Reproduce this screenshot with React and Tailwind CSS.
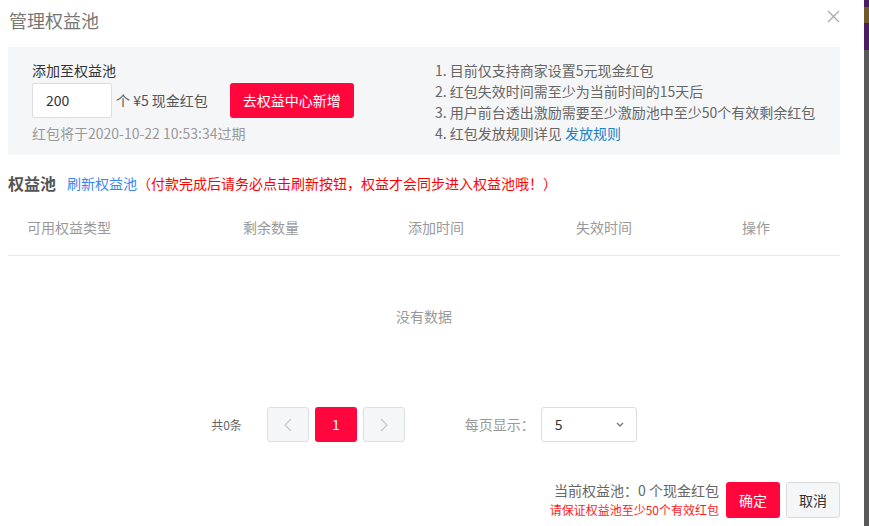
import React from 'react';

const font = { fontFamily: '"Noto Sans CJK SC", "Noto Sans", sans-serif' };

const rules = [
  '1. 目前仅支持商家设置5元现金红包',
  '2. 红包失效时间需至少为当前时间的15天后',
  '3. 用户前台透出激励需要至少激励池中至少50个有效剩余红包',
];

const columns = ['可用权益类型', '剩余数量', '添加时间', '失效时间', '操作'];

function Chevron({ dir }) {
  return (
    <svg width="8" height="14" viewBox="0 0 8 14" fill="none">
      <path
        d={dir === 'left' ? 'M7 1L1 7l6 6' : 'M1 1l6 6-6 6'}
        stroke="#c8c8c8"
        strokeWidth="1.2"
      />
    </svg>
  );
}

export default function App() {
  return (
    <div className="flex h-[526px] w-[869px] overflow-hidden bg-white" style={font}>
      {/* Modal */}
      <div className="flex w-[864px] flex-col bg-white">
        {/* Title */}
        <div className="flex h-[47px] items-start justify-between pl-[9px] pr-[24px] pt-[8px]">
          <span className="text-[18px] leading-[24px] text-[#777]">管理权益池</span>
          <svg width="13" height="13" viewBox="0 0 13 13" className="mt-[2px]">
            <path d="M1 1l11 11M12 1L1 12" stroke="#a8a8a8" strokeWidth="1.2" />
          </svg>
        </div>

        {/* Info box */}
        <div className="mx-[8px] flex h-[108px] w-[832px] bg-[#f5f6f8] pl-[24px] pt-[13px]">
          <div className="w-[401px]">
            <div className="text-[14px] leading-[20px] text-[#333]">添加至权益池</div>
            <div className="mt-[3px] flex items-center">
              <div className="flex h-[35px] w-[80px] items-center rounded-[2px] border border-[#dcdcdc] bg-white pl-[13px] text-[14px] text-[#333]">
                200
              </div>
              <span className="ml-[4px] text-[14px] text-[#555]">个 ¥5 现金红包</span>
              <button className="ml-[22px] h-[35px] w-[124px] rounded-[3px] bg-[#ff063c] text-[14px] text-white">
                去权益中心新增
              </button>
            </div>
            <div className="mt-[5px] text-[14px] leading-[20px] text-[#9a9a9a]">红包将于2020-10-22 10:53:34过期</div>
          </div>
          <div className="pl-[2px] text-[14px] leading-[21px] text-[#666]">
            {rules.map((r) => (
              <div key={r}>{r}</div>
            ))}
            <div>
              4. 红包发放规则详见 <span className="text-[#1e7fc6]">发放规则</span>
            </div>
          </div>
        </div>

        {/* Section heading */}
        <div className="mt-[16px] flex h-[24px] items-center pl-[8px]">
          <span className="text-[16px] font-bold text-[#555]">权益池</span>
          <span className="ml-[11px] text-[14px] text-[#3a86f5]">刷新权益池</span>
          <span className="text-[14px] text-[#ff0000]">（付款完成后请务必点击刷新按钮，权益才会同步进入权益池哦！）</span>
        </div>

        {/* Table */}
        <div className="mx-[8px] mt-[5px] w-[832px]">
          <div className="grid h-[56px] grid-cols-[216px_165px_168px_166px_1fr] items-center border-b border-[#e8e8e8] pl-[19px] text-[14px] text-[#999]">
            {columns.map((c) => (
              <span key={c}>{c}</span>
            ))}
          </div>
          <div className="flex h-[120px] items-center justify-center text-[14px] text-[#999]">没有数据</div>
        </div>

        {/* Pagination */}
        <div className="mt-[31px] flex h-[35px] w-[848px] items-center justify-center">
          <span className="text-[12px] text-[#666]">共0条</span>
          <div className="ml-[25px] flex h-[35px] w-[42px] items-center justify-center rounded-[3px] border border-[#dcdfe6] bg-[#f5f6f8]">
            <Chevron dir="left" />
          </div>
          <div className="ml-[6px] flex h-[35px] w-[42px] items-center justify-center rounded-[3px] bg-[#ff063c] text-[14px] text-white">
            1
          </div>
          <div className="ml-[6px] flex h-[35px] w-[42px] items-center justify-center rounded-[3px] border border-[#dcdfe6] bg-[#f5f6f8]">
            <Chevron dir="right" />
          </div>
          <span className="ml-[60px] text-[14px] text-[#999]">每页显示：</span>
          <div className="ml-[6px] flex h-[35px] w-[96px] items-center justify-between rounded-[3px] border border-[#dcdcdc] bg-white pl-[13px] pr-[12px] text-[14px] text-[#333]">
            <span>5</span>
            <svg width="8" height="5" viewBox="0 0 8 5">
              <path d="M1 1l3 3 3-3" stroke="#777" strokeWidth="1.4" fill="none" />
            </svg>
          </div>
        </div>

        {/* Footer */}
        <div className="mt-[38px] flex items-center justify-end pr-[24px]">
          <div className="flex flex-col items-end">
            <span className="text-[14px] leading-[20px] text-[#666]">当前权益池：0 个现金红包</span>
            <span className="text-[12px] leading-[20px] text-[#ff1a1a]">请保证权益池至少50个有效红包</span>
          </div>
          <button className="ml-[7px] h-[36px] w-[54px] rounded-[3px] bg-[#ff063c] text-[14px] text-white">确定</button>
          <button className="ml-[6px] h-[36px] w-[54px] rounded-[3px] border border-[#dcdcdc] bg-[#f5f6f8] text-[14px] text-[#333]">
            取消
          </button>
        </div>
      </div>

      {/* Backdrop strip */}
      <div className="flex w-[5px] flex-col">
        <div className="h-[7px] bg-[#4a1d5c]" />
        <div className="h-[16px] bg-[#6e5a2a]" />
        <div className="h-[27px] bg-[#4a1d5c]" />
        <div className="flex-1 bg-[#595959]" />
      </div>
    </div>
  );
}
